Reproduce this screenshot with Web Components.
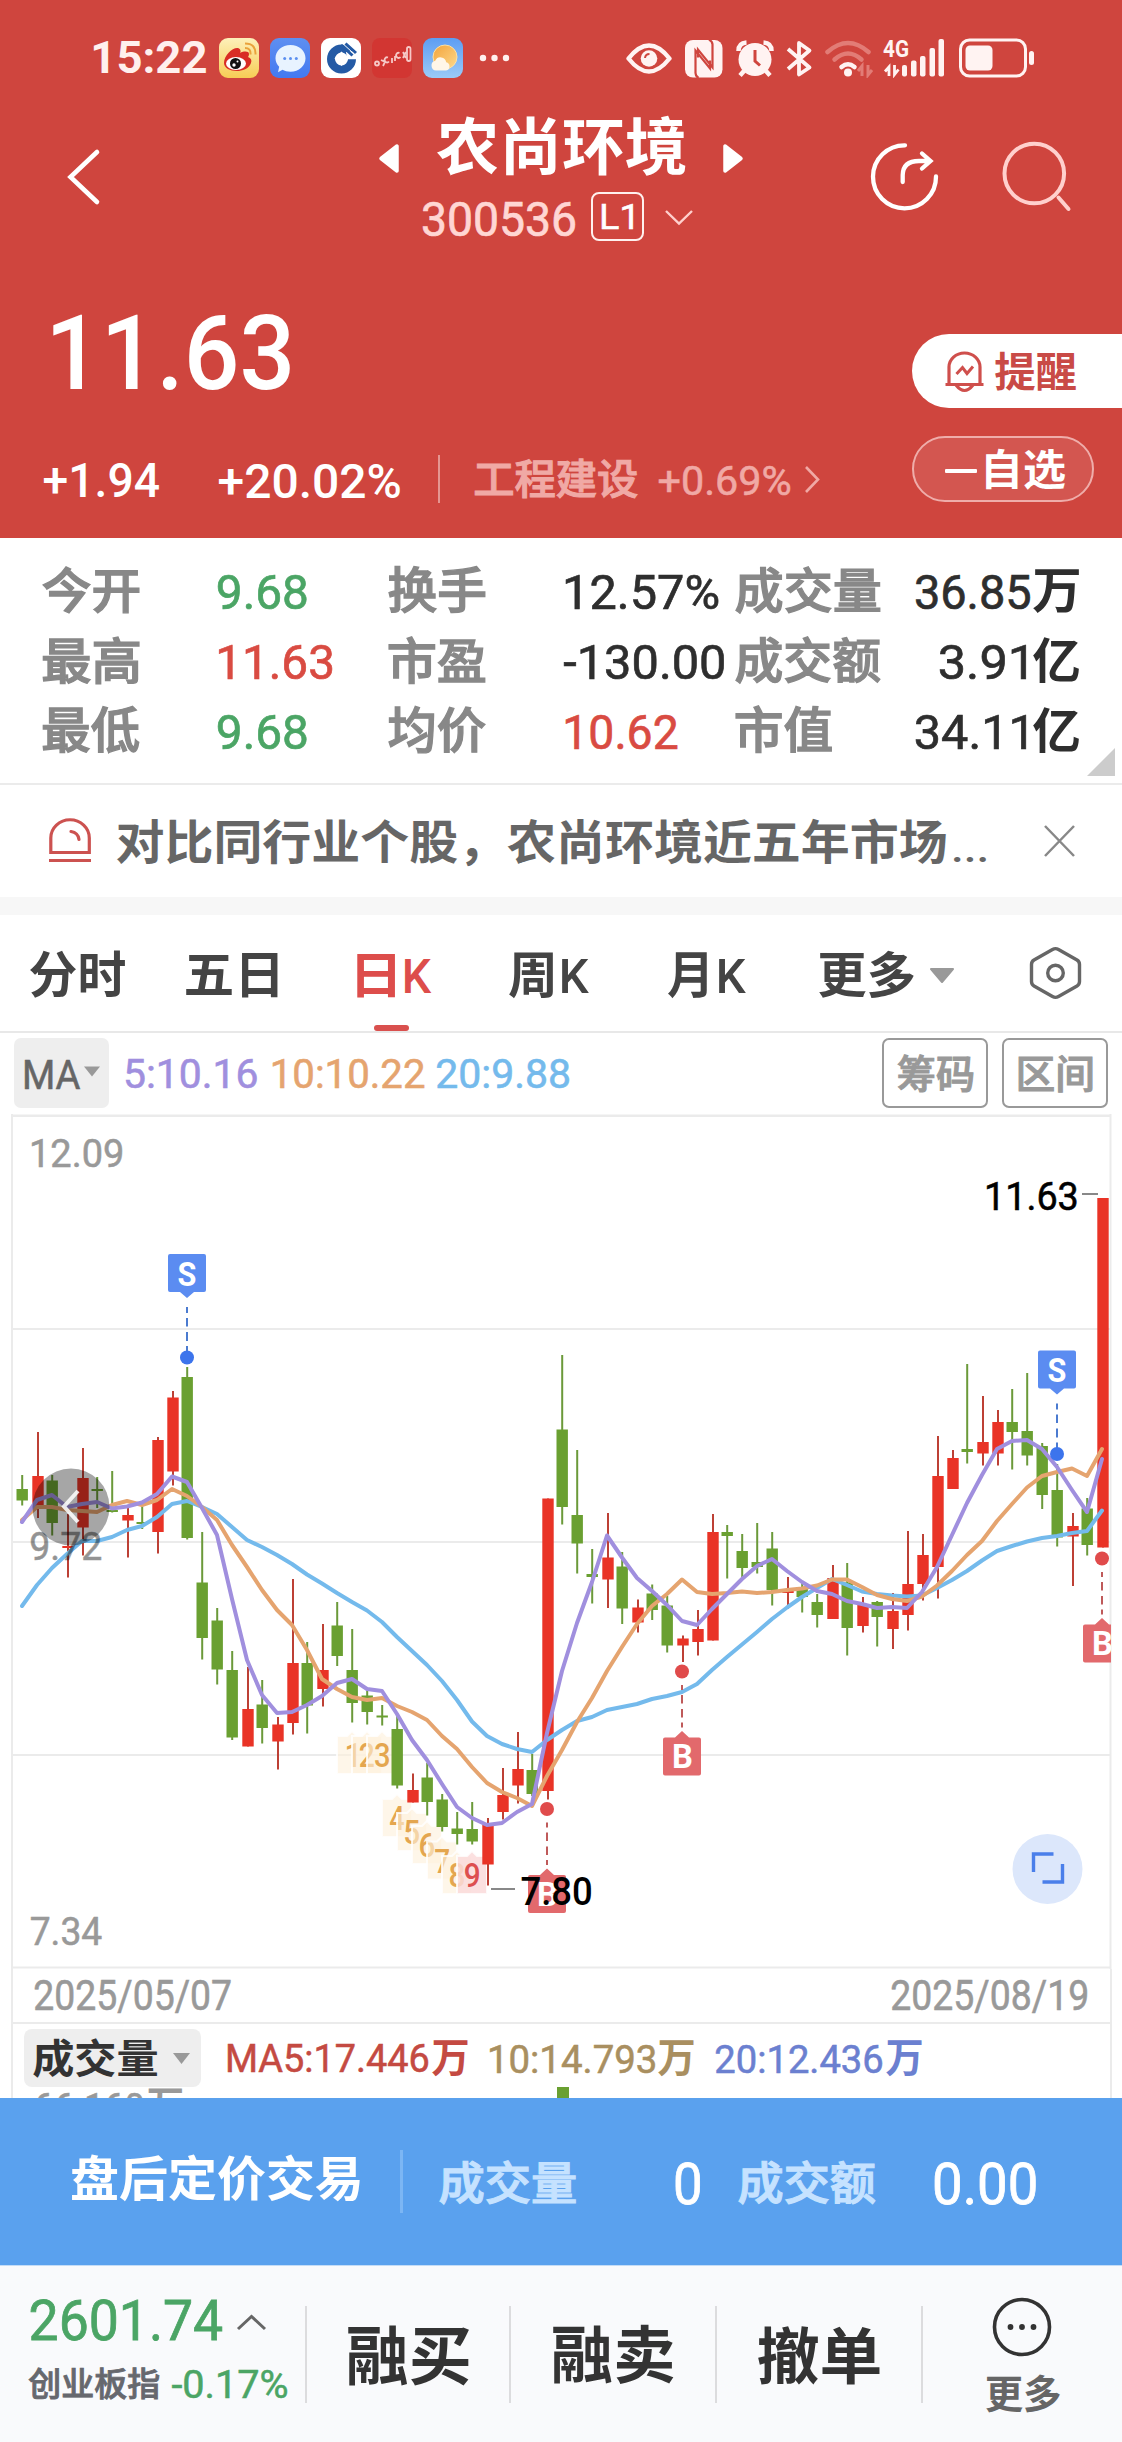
<!DOCTYPE html>
<html lang="zh-CN">
<head>
<meta charset="utf-8">
<title>农尚环境 300536</title>
<style>
  html, body { margin: 0; background: #fff; }
  body { width: 1122px; font-family: Roboto, "Noto Sans CJK SC", sans-serif; overflow-x: hidden; }
</style>
</head>
<body>
<stock-page></stock-page>
<script>
const FAMILY = 'Roboto, "Noto Sans CJK SC", sans-serif';
const pen = document.createElement('canvas').getContext('2d');

/* Font size and horizontal scale that give a text a chosen ink box. */
function inkFit(text, w, h, weight) {
  pen.font = `${weight} 200px ${FAMILY}`;
  const m = pen.measureText(text);
  const asc = m.actualBoundingBoxAscent / 200, desc = m.actualBoundingBoxDescent / 200;
  const left = -m.actualBoundingBoxLeft / 200, right = m.actualBoundingBoxRight / 200;
  const size = h / (asc + desc);
  const scale = w / ((right - left) * size);
  const cjk = /[\u4e00-\u9fff]/.test(text);
  return { size, scale, ascent: asc * size, left: left * size * scale,
    stroke: weight >= 700 ? 0 : cjk ? size * .026 : weight < 500 ? size * .014 : 0,
    fa: Math.round(m.fontBoundingBoxAscent / 200 * size), fd: Math.round(m.fontBoundingBoxDescent / 200 * size) };
}

class FitText extends HTMLElement {
  connectedCallback() {
    if (this.shadowRoot) return;
    const w = +this.getAttribute('w'), h = +this.getAttribute('h'), weight = +(this.getAttribute('weight') || 400);
    const f = inkFit(this.textContent, w, h, weight);
    const line = Math.round(f.size);
    const baseline = (line - (f.fa + f.fd)) / 2 + f.fa;
    this.attachShadow({ mode: 'open' }).innerHTML = `<style>
      :host { display: block; flex: none; width: ${w}px; height: ${h}px; }
      span { display: block; width: max-content; white-space: nowrap; -webkit-text-stroke: ${f.stroke.toFixed(2)}px currentColor;
        font: ${weight} ${f.size}px/${line}px ${FAMILY}; transform-origin: 0 0;
        transform: translate(${-f.left}px, ${f.ascent - baseline}px) scaleX(${f.scale}); }
    </style><span><slot></slot></span>`;
  }
}
customElements.define('fit-text', FitText);

/* name: [x, y, width, height, drawing] */
const ICONS = {
  weibo: [219, 38, 40, 40, `<defs><linearGradient id="w" x1="0" y1="0" x2="0" y2="1"><stop stop-color="#fdf0ba"/><stop offset="1" stop-color="#f7cd55"/></linearGradient></defs><rect x="219" y="38" width="40" height="40" rx="9" fill="url(#w)"/>
    <path d="M245 43.500q11 0 10.500 11M245 48q6 0 5.500 6.500" fill="none" stroke="#e9a23b" stroke-width="2"/>
    <path d="M224 63c0-8 9-16 14-15c3 1 3 4 2 5c4-2 9-2 9 1c0 2-1 3-1 3c3 1 4 3 3 6c-2 6-9 8-14 8c-7 0-13-3-13-8z" fill="#d92c25"/>
    <ellipse cx="236" cy="63.500" rx="10" ry="6.500" fill="#fff"/><circle cx="235.500" cy="63.500" r="5.500" fill="#111"/><circle cx="234" cy="65" r="1.700" fill="#fff"/><circle cx="237.500" cy="61.500" r="1" fill="#fff"/>`],
  chat: [270, 38, 40, 40, `<defs><linearGradient id="c" x1="0" y1="0" x2="0" y2="1"><stop stop-color="#5e8ff1"/><stop offset="1" stop-color="#4379f1"/></linearGradient></defs><rect x="270" y="38" width="40" height="40" rx="9" fill="url(#c)"/>
    <path d="M290.500 45c8.500 0 15 5.700 15 13.300s-6.500 13.400-15 13.400c-3 0-6-.7-8-2l-4.500 2.500l1.200-5.500c-2.200-2-3.700-5-3.700-8.400C275.500 50.700 282 45 290.500 45z" fill="#e8f3ff"/>
    <g fill="#5b8ff0"><circle cx="284.700" cy="58.500" r="1.500"/><circle cx="290.500" cy="58.500" r="1.500"/><circle cx="296.300" cy="58.500" r="1.500"/></g>`],
  bank: [321, 38, 40, 40, `<rect x="321" y="38" width="40" height="40" rx="9" fill="#fff"/>
    <circle cx="341.500" cy="59" r="10.500" fill="none" stroke="#245aa5" stroke-width="8"/><path d="M346 52l12-2v9.300h-11z" fill="#fff"/><path d="M341 45l11.500 10.500M345.500 43.500l10.500 9.500" stroke="#245aa5" stroke-width="3"/><path d="M342.700 43.500l11.500 10.500" stroke="#fff" stroke-width="1"/><path d="M341.500 51.500l7 7l-7 7.500l-7-7.500z" fill="#fff"/>`],
  redapp: [372, 38, 40, 40, `<rect x="372" y="38" width="40" height="40" rx="8" fill="#d23632"/>
    <g fill="none" stroke="#f6c9c7" stroke-width="1.800"><circle cx="377" cy="63.500" r="2"/><path d="M381 60l4 2-2 4M388 57.500a2.500 2.500 0 1 0 1 4M392 58v5M395 56v5M399.500 53a2.500 2.500 0 1 0 1 4M403 52l3 6M403 58l3-6"/><rect x="407" y="47" width="3.500" height="14" rx="1.700"/></g>`],
  weather: [423, 38, 40, 40, `<defs><linearGradient id="s" x1="0" y1="0" x2="0" y2="1"><stop stop-color="#5d9df3"/><stop offset="1" stop-color="#9bcbf8"/></linearGradient><linearGradient id="u" x1="0" y1="0" x2="1" y2="1"><stop stop-color="#f3a33c"/><stop offset="1" stop-color="#fdd98a"/></linearGradient></defs><rect x="423" y="38" width="40" height="40" rx="9" fill="url(#s)"/>
    <circle cx="445" cy="57" r="12" fill="url(#u)" stroke="#fbe0a5" stroke-width="1"/><path d="M436 70.500a5 5 0 0 1-.8-9.800a5.800 5.800 0 0 1 11 1.600a4.200 4.200 0 0 1 0 8.200z" fill="#fff6e8"/>`],
  dots: [479, 54, 31, 8, `<g fill="#fff0ee"><circle cx="483" cy="58" r="3.200"/><circle cx="494.500" cy="58" r="3.200"/><circle cx="506" cy="58" r="3.200"/></g>`],
  eye: [626, 40, 46, 37, `<path d="M628.500 58.500Q649 32.500 669.500 58.500Q649 84.500 628.500 58.500z" fill="none" stroke="#fff3f2" stroke-width="4.400" stroke-linejoin="round"/><circle cx="649" cy="58.500" r="8.300" fill="#fff3f2"/><path d="M645 58a4.500 4.500 0 0 1 4.500-4" stroke="#cf453e" stroke-width="2" fill="none"/>`],
  nfc: [684, 39, 40, 39, `<rect x="685" y="40" width="37.500" height="37.500" rx="8" fill="#fff3f2"/><path d="M698.500 78q-3-2-3-5V50.500L710 68.500v-8M709 39.500q3.500 2 3.500 5V67.500L698 49.500v8" fill="none" stroke="#cf453e" stroke-width="2.200"/>`],
  alarm: [735, 39, 40, 39, `<circle cx="755" cy="59.500" r="16.500" fill="#fff3f2"/><path d="M738.500 51q0-8 8-8.500M771.500 51q0-8-8-8.500M744 71l-4 4.500M766 71l4 4.500" stroke="#fff3f2" stroke-width="4.500" fill="none"/><path d="M755 50v11l5 4.500" stroke="#cf453e" stroke-width="3" fill="none"/>`],
  bluetooth: [786, 39, 27, 39, `<path d="M788 49l21.500 18.500L799 74.500V43l10.500 7.500L788 69" fill="none" stroke="#fff3f2" stroke-width="3.800" stroke-linejoin="round"/>`],
  wifi: [825, 38, 50, 40, `<g fill="none" stroke-width="4.500" stroke-linecap="round"><path d="M827.500 52q20.500-18 41 0" stroke="#e27c76"/><path d="M834.500 59.500q13.500-12 27 0" stroke="#e27c76"/><path d="M841.500 67q6.500-5.500 13 0" stroke="#fff3f2"/></g><circle cx="848" cy="72.500" r="4" fill="#fff3f2"/><path d="M862 76V66l-4 5M868 65v10l4-5" stroke="#e27c76" stroke-width="3" fill="none"/>`],
  bars: [883, 30, 62, 48, `<g fill="#fff3f2"><rect x="902" y="65" width="5" height="11.500" rx="2"/><rect x="911" y="60.500" width="5.500" height="16" rx="2"/><rect x="920" y="56" width="5.500" height="20.500" rx="2"/><rect x="929.500" y="48" width="5.500" height="28.500" rx="2"/><rect x="938.500" y="39" width="5.500" height="37.500" rx="2"/></g><path d="M889 76V67l-4 4.500M894.500 65v9.500l4-5" stroke="#fff3f2" stroke-width="2.800" fill="none"/><text x="883" y="56.500" font-family="Roboto" font-weight="700" font-size="24.500" fill="#fff3f2" textLength="26" lengthAdjust="spacingAndGlyphs">4G</text>`],
  battery: [958, 37, 78, 41, `<rect x="960.500" y="40" width="65" height="36" rx="9" fill="none" stroke="#fff3f2" stroke-width="3"/><rect x="965.500" y="45.500" width="27" height="25" rx="4.500" fill="#fff3f2"/><rect x="1029" y="51" width="5" height="14" rx="2.500" fill="#fff3f2"/>`],
  back: [66, 147, 36, 60, `<path d="M97 152L70.500 177L97 202" fill="none" stroke="#fff" stroke-width="4.600" stroke-linecap="round"/>`],
  prev: [378, 143, 22, 31, `<path d="M381 158.500L397 146v25z" fill="#fff" stroke="#fff" stroke-width="3.500" stroke-linejoin="round"/>`],
  next: [722, 143, 22, 31, `<path d="M741 158.500L725 146v25z" fill="#fff" stroke="#fff" stroke-width="3.500" stroke-linejoin="round"/>`],
  down: [664, 208, 31, 18, `<path d="M666 211l13 12.500l13-12.500" fill="none" stroke="#ffd0cd" stroke-width="2.400"/>`],
  share: [869, 141, 71, 71, `<g fill="none" stroke="#fff" stroke-width="4.300" stroke-linecap="round"><path d="M905 145.300A31.500 31.500 0 1 0 936 176.500"/><path d="M902.700 182V175Q903 161 919 161H930M922 153.500l8.500 7.500l-8.500 7.500"/></g>`],
  search: [1002, 141, 70, 71, `<g fill="none" stroke="#ffd0cd" stroke-width="4" stroke-linecap="round"><circle cx="1034.300" cy="173.500" r="29.800"/><path d="M1058.500 197.500l10 11.500"/></g>`],
  right: [803, 464, 19, 31, `<path d="M806 467l12 12.500l-12 12.500" fill="none" stroke="#f0a9a5" stroke-width="2.600"/>`],
  bell: [944, 351, 41, 42, `<g fill="none" stroke="#cf4f4c" stroke-width="3.200"><path d="M949 384V367a15.500 14 0 0 1 31 0v17M945.500 384.500h38"/><path d="M956 385q8.500 11 17 0"/><path d="M956.500 374l6-6.500l4.500 6l6-7" stroke-width="3"/></g>`],
  corner: [1087, 748, 28, 28, `<path d="M1115 748v28h-28z" fill="#ccc"/>`],
  siren: [48, 817, 44, 46, `<g fill="none" stroke="#cc5250" stroke-width="3.200"><path d="M50.800 852.500V838a19 18 0 0 1 38.500 0v14.500z"/><path d="M49 860.500h42"/><path d="M71 831.500q7 1 8 8" stroke-linecap="round"/></g>`],
  close: [1043, 824, 33, 34, `<path d="M1045 826l29 30M1074 826l-29 30" stroke="#888" stroke-width="2.500"/>`],
  drop: [929, 967, 26, 17, `<path d="M931 969h22l-11 13z" fill="#999" stroke="#999" stroke-width="2" stroke-linejoin="round"/>`],
  hex: [1028, 945, 55, 57, `<path d="M1052.500 949.500q3-1.700 6 0L1077 960q2.500 1.500 2.500 4.500v17q0 3-2.500 4.500l-18.500 10.500q-3 1.700-6 0L1034 986q-2.500-1.500-2.500-4.500v-17q0-3 2.500-4.500z" fill="none" stroke="#666" stroke-width="3.400"/><circle cx="1055.500" cy="973" r="7.800" fill="none" stroke="#666" stroke-width="3.400"/>`],
  tri1: [84, 1066, 16, 11, `<path d="M84 1066.500h16l-8 10z" fill="#999"/>`],
  tri2: [173, 2053, 17, 12, `<path d="M173 2053h17l-8.500 11z" fill="#999"/>`],
  up: [236, 2313, 31, 18, `<path d="M238 2329l13.500-12.500l13.500 12.500" fill="none" stroke="#666" stroke-width="3"/>`],
  more: [992, 2297, 60, 60, `<circle cx="1022" cy="2327" r="27.500" fill="none" stroke="#333" stroke-width="3.600"/><g fill="#333"><circle cx="1010.500" cy="2327" r="2.900"/><circle cx="1022" cy="2327" r="2.900"/><circle cx="1033.500" cy="2327" r="2.900"/></g>`]
};
class StockIcon extends HTMLElement {
  connectedCallback() {
    if (this.shadowRoot) return;
    const [x, y, w, h, art] = ICONS[this.getAttribute('name')];
    this.attachShadow({ mode: 'open' }).innerHTML =
      `<style>:host{display:block;flex:none;width:${w}px;height:${h}px}svg{display:block}</style><svg width="${w}" height="${h}" viewBox="${x} ${y} ${w} ${h}">${art}</svg>`;
  }
}
customElements.define('stock-icon', StockIcon);

/* Row builders: every item carries its own box, and gaps between items become margins. */
const T = (text, x, y, w, h, color, weight = 400) => ({ x, y, w, h,
  html: m => `<fit-text w="${w}" h="${h}" weight="${weight}" style="color:${color};margin:${m}">${text}</fit-text>` });
const I = name => { const [x, y, w, h] = ICONS[name]; return { x, y, w, h, html: m => `<stock-icon name="${name}" style="margin:${m}"></stock-icon>` }; };
const B = (x, y, w, h, style, inner = '') => ({ x, y, w, h, html: m => `<div style="box-sizing:border-box;flex:none;width:${w}px;height:${h}px;${style};margin:${m}">${inner}</div>` });
function row(x0, y0, h, items, style = '') {
  let end = x0;
  const body = items.map(i => { const m = `${i.y - y0}px 0 0 ${i.x - end}px`; end = i.x + i.w; return i.html(m); }).join('');
  return `<div style="display:flex;align-items:flex-start;height:${h}px;${style}">${body}</div>`;
}
function part(name, hostStyle, render) {
  customElements.define(name, class extends HTMLElement {
    connectedCallback() {
      if (this.shadowRoot) return;
      this.attachShadow({ mode: 'open' }).innerHTML = `<style>:host{display:block;box-sizing:border-box;${hostStyle}}</style>${render()}`;
    }
  });
}

part('status-bar', 'height:100px;background:#cf453e', () =>
  row(0, 0, 100, [T('15:22', 94, 42, 112, 32, '#fff0ee', 700), ...['weibo', 'chat', 'bank', 'redapp', 'weather', 'dots', 'eye', 'nfc', 'alarm', 'bluetooth', 'wifi', 'bars', 'battery'].map(I)]));

part('quote-header', 'height:438px;background:#cf453e', () =>
  row(0, 100, 170, [
    I('back'),
    B(378, 100, 366, 170, '', row(378, 100, 90, [I('prev'), T('农尚环境', 436.5, 117, 248.5, 60, '#fff', 700), I('next')])
      + row(378, 190, 80, [T('300536', 423, 201, 152, 36, '#ffd6d3'),
        B(591, 192, 53, 49, 'border:2px solid #fff0ee;border-radius:8px;display:flex;align-items:center;justify-content:center', '<fit-text w="31" h="25" weight="400" style="color:#fff">L1</fit-text>'), I('down')])),
    I('share'), I('search')])
  + `<div style="display:flex"><div style="width:912px;flex:none">`
  + row(0, 270, 160, [T('11.63', 53, 313, 237, 77, '#fff', 500)])
  + row(0, 430, 108, [T('+1.94', 44, 463, 115, 35, '#fff', 500), T('+20.02%', 219, 463, 181, 35, '#fff', 500),
      B(437.5, 455, 2, 48, 'background:#e59691'), T('工程建设', 475, 460, 162, 39, '#f0a9a5', 500), T('+0.69%', 659, 466, 131, 29.500, '#f0a9a5'), I('right')])
  + `</div><div style="width:210px;flex:none">`
  + row(912, 270, 160, [B(912, 334, 210, 74, 'background:#fff;border-radius:37px 0 0 37px', row(912, 334, 74, [I('bell'), T('提醒', 995, 352, 81, 39, '#c94a46', 700)]))])
  + row(912, 430, 108, [B(912, 436, 182, 66, 'background:#d35650;border:2px solid #efadaa;border-radius:33px', row(914, 438, 62, [B(945, 468.5, 32, 4, 'background:#fff;border-radius:1px'), T('自选', 986, 450, 79, 40, '#fff', 700)]))])
  + `</div></div>`);

const GREEN = '#4ba565', RED = '#d94b42', INK = '#2e2e2e';
part('quote-stats', 'height:247px;background:#fff;border-bottom:2px solid #ebebeb', () => {
  const rows = [
    [['今开', '9.68', 217.500, 88.500, GREEN], ['换手', '12.57%', 566, 152, INK], ['成交量', 144, '36.85', 916, 114, '万']],
    [['最高', '11.63', 219, 113, RED], ['市盈', '-130.00', 564, 160, INK], ['成交额', 144, '3.91', 940, 86, '亿']],
    [['最低', '9.68', 217.500, 88.500, GREEN], ['均价', '10.62', 566, 111, RED], ['市值', 95.500, '34.11', 916, 110, '亿']]];
  return '<div style="height:10px"></div>' + rows.map(([a, b, c], i) => { const y = 567 + 70 * i;
    const items = [T(a[0], 43, y, 96, 46, '#888', 500), T(a[1], a[2], y + 6.500, a[3], 36, a[4]),
      T(b[0], 389, y, 96, 46, '#888', 500), T(b[1], b[2], y + 6.500, b[3], 36, b[4]),
      T(c[0], 735.500, y, c[1], 46, '#888', 500), T(c[2], c[3], y + 6.500, c[4], 36, INK), T(c[5], 1032.500, y + (c[5] == '万' ? 3 : 1), 46, c[5] == '万' ? 43 : 45, INK, 700)];
    if (i == 2) items.push(I('corner'));
    return row(0, 548 + 70 * i, 70, items); }).join('');
});

part('notice-bar', 'height:130px;background:#fff;border-bottom:18px solid #f7f7f7', () =>
  row(0, 785, 112, [I('siren'), T('对比同行业个股，农尚环境近五年市场', 117, 818.500, 829, 47, '#666', 700), T('...', 954, 858, 32, 5, '#666', 500), I('close')]));

part('period-tabs', 'height:118px;background:#fff;border-bottom:2px solid #e8e8e8', () => {
  const c = '#444';
  return row(0, 915, 110, [T('分时', 30, 951, 95, 47, c, 700), T('五日', 185.500, 953.500, 91.500, 44, c, 700),
    T('日', 356.500, 954, 38, 43, '#dd4d4b', 700), T('K', 404.500, 958, 26.500, 35, '#dd4d4b', 500),
    T('周', 509, 952.500, 44, 45, c, 700), T('K', 561.500, 958, 27, 35, c, 500), T('月', 668, 952.500, 39, 45, c, 700), T('K', 719, 958, 27, 35, c, 500),
    T('更多', 819, 951, 95, 47, c, 700), I('drop'), I('hex')])
    + row(0, 1025, 6, [B(374, 1025, 35, 6, 'background:#d9504e;border-radius:3px')]);
});

const chip = (x, w, text, tw, th) => B(x, 1038, w, 70, 'border:2px solid #999;border-radius:7px;display:flex;align-items:center;justify-content:center', `<fit-text w="${tw}" h="${th}" weight="500" style="color:#999">${text}</fit-text>`);
part('ma-legend', 'height:81px;background:#fff', () => row(0, 1033, 81, [
  B(14, 1038, 95, 70, 'background:#eee;border-radius:7px', row(14, 1038, 70, [T('MA', 25, 1059.500, 55, 29.500, '#666'), I('tri1')])),
  T('5:10.16', 125.500, 1059, 130.500, 30.500, '#a08fde'), T('10:10.22', 273, 1059, 151, 30.500, '#e5a46f'), T('20:9.88', 437, 1059, 132, 30.500, '#74baec'),
  chip(882, 106, '筹码', 75, 37), chip(1002, 106, '区间', 73, 36)]));

/* direction, high, body top, body bottom, low */
const BARS = [
['g',1475,1489,1500.5,1505.5],['r',1432,1476,1507,1518],['g',1475,1480.5,1523,1535.5],['r',1514,1546,1548,1577.5],['r',1448,1478,1527.5,1555.5],['g',1477,1489,1491,1508],['g',1471,1510,1512,1512.5],['r',1508,1515,1520.5,1557.5],['g',1506.5,1522,1524,1529],['r',1437,1440,1532,1553.5],
['r',1391,1397.5,1471.5,1485.5],['g',1367,1377,1538,1539.5],['g',1532,1582.5,1638,1659.5],['g',1608,1620.5,1669.5,1684.5],['g',1651,1670,1737.5,1740],['r',1667,1709,1746.5,1746.5],['g',1680,1704.5,1728,1743.5],['r',1717,1724.5,1741.5,1769.5],['r',1579,1663,1723,1734.5],['g',1642,1663,1705.5,1733.5],
['r',1624,1670,1689,1706.5],['g',1602,1625.5,1656,1666],['g',1629,1670,1703,1722.5],['g',1690.5,1695.5,1712,1724.5],['g',1705,1715.5,1717.5,1725.5],['g',1716,1729,1785.5,1788.5],['r',1773.5,1790,1802.5,1802.5],['g',1763,1777.5,1802,1815.5],['g',1794,1799.5,1827,1831.5],['g',1812,1828.5,1834,1844.5],
['g',1802,1829,1841.5,1844.5],['r',1818,1823.5,1864.5,1885.5],['r',1768,1795,1812,1819.5],['r',1732,1769,1785.5,1803.5],['g',1754,1770,1794,1796],['r',1498.5,1498.5,1791,1799.5],['g',1355,1429.5,1507,1524.5],['g',1450,1515,1543.5,1573.5],['g',1549,1574,1577,1603.5],['r',1513,1557.5,1579.5,1608],
['g',1552,1566.5,1608.5,1624],['r',1599.5,1607.5,1622.5,1632.5],['g',1584.5,1593.5,1610,1620],['g',1596,1605.5,1645.5,1652.5],['r',1635.5,1638.5,1645.5,1662],['r',1610,1629,1642,1655.5],['r',1514,1532,1640.5,1640.5],['g',1525,1532,1536,1578.5],['g',1534,1551,1568,1578],['g',1523,1562,1567,1573.5],
['g',1532,1548.5,1590,1605.5],['r',1577,1591,1593,1609],['g',1581,1588,1597,1612.5],['g',1594,1602,1615,1627.5],['r',1565,1578,1619,1619],['g',1563,1582.5,1628,1655.5],['r',1597,1605,1626,1632.5],['g',1601,1602,1617,1646.5],['r',1593,1611,1629,1649],['r',1531,1584,1615,1630.5],
['r',1534,1555,1584,1600.5],['r',1436,1476,1567,1598.5],['r',1450,1458,1489,1489],['g',1364,1449,1452,1463.5],['r',1396,1442,1453.5,1465.5],['r',1410,1422,1453.5,1465.5],['g',1389,1422,1432,1469.5],['g',1373,1431,1455.5,1465.5],['g',1443,1446,1495,1509],['g',1464,1490,1537.5,1546.5],['r',1513,1526,1536.5,1586],['g',1498,1508.5,1545,1555.5],['r',1198,1198,1547.5,1547.5]];
const MA5 = [1522,1500,1495,1507,1504,1502,1508.5,1506.5,1502.5,1494,1476.5,1482,1508,1535,1599,1660,1695,1713,1712,1705,1696,1683,1679,1689,1691,1714,1740,1760,1784,1807,1818,1825,1823,1812,1804,1733,1671,1623,1582,1535.5,1557.5,1578,1591,1605,1621,1625,1609,1594,1579,1566,1559,1571,1582,1591,1594,1601,1604,1608,1607,1608,1592,1567,1535,1503,1475,1449,1441,1440,1449,1467,1490,1512,1459];
const MA10 = [1520,1507,1507,1510,1511,1512,1505,1501,1505,1500,1489,1496,1507,1520,1545,1567,1590,1610,1625,1650,1679,1689,1697,1700,1698,1706,1712,1720,1736,1749,1767,1783,1792,1798,1806,1776,1750,1722,1698,1671,1647,1624,1606,1594,1579.5,1592,1594,1593,1591.5,1593,1592,1590,1588.5,1585.5,1579.5,1579.5,1587,1595,1599,1601,1596.5,1585.5,1571,1555,1541,1521,1504,1487.5,1476,1472,1468.5,1476,1449];
const MA20 = [1606,1585,1568,1554,1541,1541,1537,1530,1526,1517,1504,1501,1507,1514,1527,1540,1547,1555,1564,1574.5,1583.5,1593,1602,1610.5,1622,1637,1651,1665,1681,1700,1721.5,1736,1744,1749,1752,1740,1730,1721,1717,1710,1707,1704,1699,1696,1692,1684,1670,1657,1644.5,1632,1619,1607.5,1597,1588,1579,1585,1591.5,1594,1595.5,1596.5,1595.5,1588,1580,1571,1560.5,1551,1546,1541.5,1538,1536,1533,1531,1510.5];

function svgText(text, x, y, w, h, color, weight = 400) {
  const f = inkFit(text, w, h, weight);
  return `<text transform="translate(${x - f.left} ${y + f.ascent}) scale(${f.scale} 1)" font-size="${f.size}" font-weight="${weight}" fill="${color}" stroke="${color}" stroke-width="${f.stroke.toFixed(2)}">${text}</text>`;
}
part('k-chart', 'height:855px;background:#fff', () => {
  const line = (ys, c) => `<polyline points="${ys.map((y, i) => `${22 + 15 * i},${y}`).join(' ')}" fill="none" stroke="${c}" stroke-width="4" stroke-linejoin="round" stroke-linecap="round"/>`;
  const bars = BARS.map(([d, hi, t, b, lo], i) => { const x = 22.2 + 15 * i + (d == 'r' ? .8 : 0);
    return `<rect x="${x - 1}" y="${hi}" width="2" height="${lo - hi}" fill="${d == 'r' ? '#bd4035' : '#6b9a3a'}"/><rect x="${x - 5.7}" y="${t}" width="11.400" height="${b - t}" fill="${d == 'r' ? '#e93326' : '#6aa031'}"/>`; }).join('');
  const tag = (n, x, y) => { const hot = n == 9, c = hot ? '#dd4f4f' : '#e4a64f';
    return `<path d="M${x - 15} ${y - 7}H${x - 5}L${x} ${y - 12}L${x + 5} ${y - 7}H${x + 15}V${y + 31}H${x - 15}z" fill="${hot ? '#fadada' : '#fef0dc'}" fill-opacity="${hot ? .85 : .62}" stroke="#fff" stroke-opacity=".8" stroke-width="2"/>` + svgText(String(n), x - (n == 1 ? 5 : 7), y, n == 1 ? 9 : 14, 24, c, 500); };
  const sell = (x, y) => `<path d="M${x - 17} ${y}h34q2 0 2 2v34q0 2-2 2H${x + 7}l-7 6l-7-6H${x - 17}q-2 0-2-2V${y + 2}q0-2 2-2z" fill="#5b8cf1"/>${svgText('S', x - 8.5, y + 7, 17, 25, '#fff', 700)}<path d="M${x} ${y + 53}v6m0 5v8.500m0 5.500v9m0 5v6" stroke="#4b7bd0" stroke-width="2"/><circle cx="${x}" cy="${y + 103.5}" r="7" fill="#3c74ec"/>`;
  const buy = (x, dot) => `<circle cx="${x}" cy="${dot}" r="7" fill="#e04b4b"/><path d="M${x} ${dot + 13.5}v5m0 5v8.500m0 5.500v8.500m0 5v5" stroke="#bf5a5a" stroke-width="2"/><path d="M${x - 17} ${dot + 66}h10l7-6.500l7 6.500h10q2 0 2 2v34q0 2-2 2h-34q-2 0-2-2v-34q0-2 2-2z" fill="#e2696c"/>${svgText('B', x - 8, dot + 72.5, 17.5, 24, '#fff', 700)}`;
  return `<svg width="1122" height="855" viewBox="0 1114 1122 855" style="display:block" font-family='${FAMILY}'>
    <clipPath id="edge"><rect x="0" y="1114" width="1111" height="855"/></clipPath>
    <g fill="#ebebeb"><rect x="11" y="1114.500" width="1100" height="2.500"/><rect x="11" y="1114" width="2" height="855"/><rect x="1109.500" y="1114" width="2" height="855"/><rect x="12" y="1328" width="1098" height="2"/><rect x="12" y="1541" width="1098" height="2"/><rect x="12" y="1754" width="1098" height="2"/><rect x="12" y="1966.500" width="1098" height="2"/></g>
    ${svgText('12.09', 32, 1139, 90, 28.5, '#999')}
    ${[[1,352,1743],[2,367,1743],[3,382,1743],[4,397,1806],[5,412,1820],[6,427,1833],[7,442,1848.5],[8,457,1863],[9,472,1863]].map(a => tag(...a)).join('')}
    ${bars}${line(MA20, '#74baec')}${line(MA10, '#e5a46f')}${line(MA5, '#a08fde')}
    ${sell(187, 1254)}${sell(1057, 1350.5)}
    <g clip-path="url(#edge)">${buy(547, 1809)}${buy(682, 1671.5)}${buy(1102, 1558.5)}</g>
    <path d="M491 1889h24M1082 1194h16" stroke="#888" stroke-width="2"/>
    ${svgText('7.80', 521.5, 1877.5, 69.5, 28, '#000', 500)}${svgText('11.63', 987, 1182, 89.5, 28.5, '#000')}
    <circle cx="71" cy="1507" r="38.500" fill="#000" fill-opacity=".35"/><path d="M78 1491l-14 15.500l14 15.500" fill="none" stroke="#fff" stroke-opacity=".85" stroke-width="4"/>
    <g opacity=".42">${svgText('9.72', 31, 1532.5, 70, 28, '#000')}</g>${svgText('7.34', 31, 1917, 70.5, 28.5, '#999')}
    <circle cx="1047.500" cy="1869" r="35" fill="#dce7fb"/><path d="M1033.500 1872v-18h20M1062.500 1864v18h-20" fill="none" stroke="#4a7fea" stroke-width="3.400"/>
  </svg>`;
});

const FRAME = 'margin:0 10px 0 11px;border:solid #ebebeb;background:#fff;';
part('date-axis', `height:55px;${FRAME}border-width:0 2px 2px`, () => row(13, 1969, 53, [T('2025/05/07', 34.500, 1979, 195.500, 34, '#999'), T('2025/08/19', 892, 1979, 195, 34, '#999')]));

part('volume-head', `height:74px;overflow:hidden;${FRAME}border-width:0 2px`, () => {
  const g = (t, x, w, wx, c) => [T(t, x, 2044, w, 28.5, c), T('万', wx, 2041, 35.5, 35, c, 700)];
  return row(13, 2024, 63, [B(24, 2029, 177, 58, 'background:#eee;border-radius:8px', row(24, 2029, 58, [T('成交量', 33, 2038.500, 124, 39, '#333', 700), I('tri2')])),
    ...g('MA5:17.446', 228, 200, 432, '#c44a42'), ...g('10:14.793', 490, 165, 658, '#a98f60'), ...g('20:12.436', 716, 166, 886, '#6b80d0')])
    + row(13, 2087, 11, [T('66.160', 36, 2092, 107, 28.5, '#999'), T('万', 147, 2089, 35, 34, '#999', 700), B(556.500, 2087, 12, 11, 'background:#6aa031')]);
});

part('after-hours', 'height:168px;background:#5aa1ee;border-bottom:1px solid #c3dcf7', () => row(0, 2098, 167, [
  T('盘后定价交易', 72, 2155, 288, 46.500, '#fff', 700), B(399.500, 2150, 3, 63, 'background:#7cb6f4'),
  T('成交量', 439.500, 2161, 135.500, 43.500, '#c5e2ff', 500), T('0', 676, 2163, 24, 42, '#fff'),
  T('成交额', 739, 2161, 136, 43.500, '#c5e2ff', 500), T('0.00', 935, 2163, 100.500, 42, '#fff')]));

part('trade-bar', 'height:176px;background:#f9fafc', () => {
  const rule = x => B(x, 2306, 2, 97, 'background:#dcdcde');
  const big = (t, x, w) => T(t, x, 2325.500, w, 59, '#333', 700);
  return row(0, 2266, 176, [
    B(0, 2266, 304, 176, '', row(0, 2266, 90, [T('2601.74', 31, 2300, 191, 40.500, GREEN, 400), I('up')])
      + row(0, 2356, 86, [T('创业板指', 29, 2369, 130, 31, '#66686e', 500), T('-0.17%', 172, 2369.500, 115, 28, GREEN)])),
    rule(304.500), big('融买', 348, 121), rule(509), big('融卖', 553, 120.500), rule(714.500), big('撤单', 757.500, 121.500), rule(920.500),
    B(985, 2266, 75, 176, '', row(985, 2266, 100, [I('more')]) + row(985, 2366, 76, [T('更多', 985.500, 2375, 74, 37, '#666', 700)]))]);
});

part('stock-page', 'width:1122px;height:2442px;overflow:hidden', () =>
  ['status-bar', 'quote-header', 'quote-stats', 'notice-bar', 'period-tabs', 'ma-legend', 'k-chart', 'date-axis', 'volume-head', 'after-hours', 'trade-bar'].map(n => `<${n}></${n}>`).join(''));
</script>
</body>
</html>
